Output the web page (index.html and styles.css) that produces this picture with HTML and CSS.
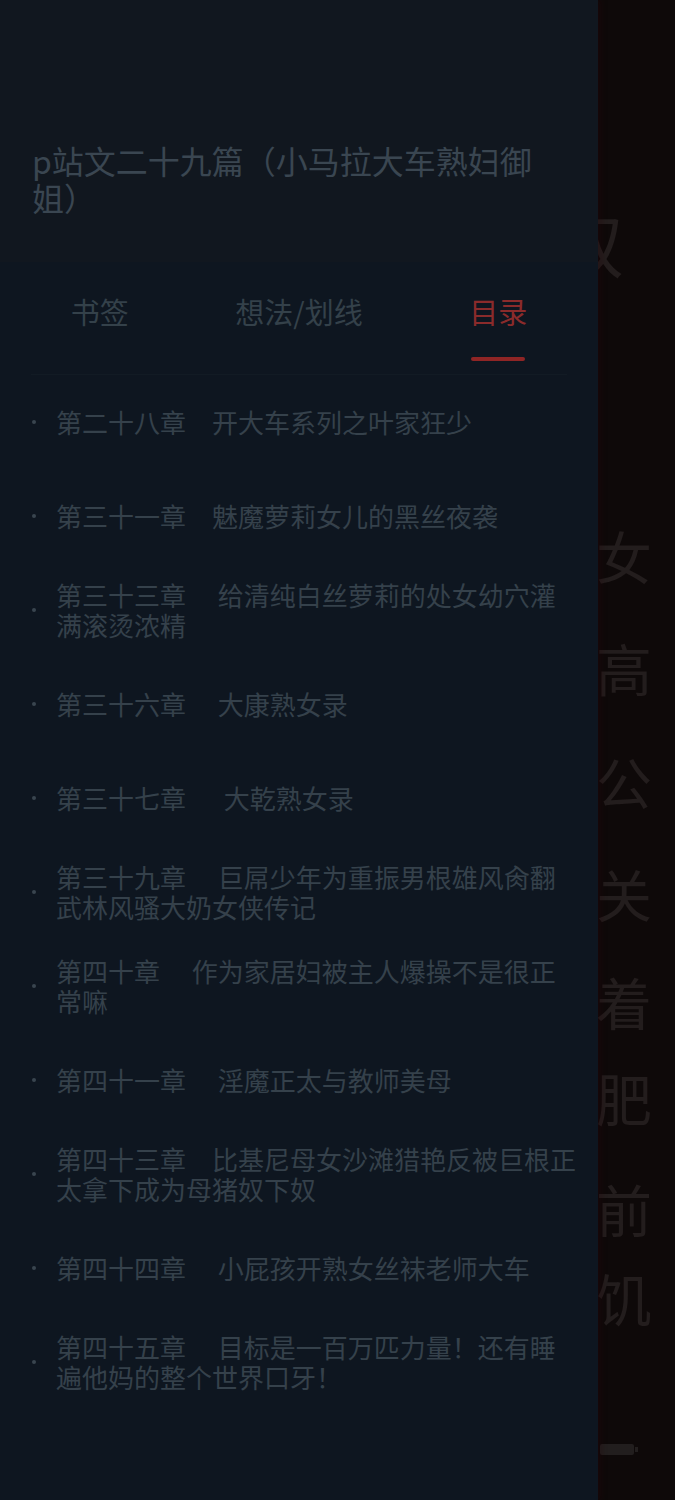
FILE: index.html
```html
<!DOCTYPE html>
<html lang="zh-CN">
<head>
<meta charset="utf-8">
<title>目录</title>
<link rel="stylesheet" href="styles.css">
</head>
<body>
<div class="reader">
  <div class="big-char">奴</div>
  <div class="col">
    <div class="ch">女</div>
    <div class="ch">高</div>
    <div class="ch">公</div>
    <div class="ch">关</div>
    <div class="ch">着</div>
    <div class="ch">肥</div>
    <div class="ch">前</div>
    <div class="ch">饥</div>
  </div>
  <div class="battery"><span class="fill"></span><span class="nub"></span></div>
</div>

<aside class="drawer">
  <header class="head">
    <h1 class="title">p站文二十九篇（小马拉大车熟妇御姐）</h1>
  </header>
  <nav class="tabs">
    <div class="tab"><span class="label">书签</span></div>
    <div class="tab"><span class="label">想法/划线</span></div>
    <div class="tab active"><span class="label">目录</span><span class="bar"></span></div>
  </nav>
  <div class="divider"></div>
  <ul class="toc">
    <li><span class="dot"></span><span class="txt">第二十八章　开大车系列之叶家狂少</span></li>
    <li><span class="dot"></span><span class="txt">第三十一章　魅魔萝莉女儿的黑丝夜袭</span></li>
    <li><span class="dot"></span><span class="txt">第三十三章　 给清纯白丝萝莉的处女幼穴灌满滚烫浓精</span></li>
    <li><span class="dot"></span><span class="txt">第三十六章　 大康熟女录</span></li>
    <li><span class="dot"></span><span class="txt">第三十七章　  大乾熟女录</span></li>
    <li><span class="dot"></span><span class="txt">第三十九章　 巨屌少年为重振男根雄风肏翻武林风骚大奶女侠传记</span></li>
    <li><span class="dot"></span><span class="txt">第四十章　 作为家居妇被主人爆操不是很正常嘛</span></li>
    <li><span class="dot"></span><span class="txt">第四十一章　 淫魔正太与教师美母</span></li>
    <li><span class="dot"></span><span class="txt">第四十三章　比基尼母女沙滩猎艳反被巨根正太拿下成为母猪奴下奴</span></li>
    <li><span class="dot"></span><span class="txt">第四十四章　 小屁孩开熟女丝袜老师大车</span></li>
    <li><span class="dot"></span><span class="txt">第四十五章　 目标是一百万匹力量！还有睡遍他妈的整个世界口牙！</span></li>
  </ul>
</aside>
</body>
</html>
```

FILE: styles.css
```css
* { box-sizing: border-box; }
html, body {
  margin: 0;
  padding: 0;
  width: 675px;
  height: 1500px;
  overflow: hidden;
  background: #0e0909;
  font-family: "Noto Sans CJK SC", "Noto Sans", sans-serif;
}

/* reader page behind the drawer */
.reader {
  position: relative;
  width: 675px;
  height: 1500px;
  padding-top: 208px;
  padding-left: 598px;
  color: #231d1d;
}
.big-char {
  margin-left: -44px;
  font-size: 70px;
  line-height: 70px;
  height: 70px;
}
.col {
  margin-top: 249px;
  display: flex;
  flex-direction: column;
}
.ch {
  font-size: 56px;
  line-height: 56px;
  height: 56px;
  margin-left: -2px;
}
.ch:nth-child(2) { margin-top: 56px; }
.ch:nth-child(3) { margin-top: 58px; }
.ch:nth-child(4) { margin-top: 56px; }
.ch:nth-child(5) { margin-top: 52px; }
.ch:nth-child(6) { margin-top: 40px; }
.ch:nth-child(7) { margin-top: 55px; }
.ch:nth-child(8) { margin-top: 33px; }

.battery {
  margin-top: 118px;
  margin-left: 2px;
  width: 38px;
  height: 12px;
  display: flex;
  align-items: center;
}
.battery .fill {
  width: 34px;
  height: 11px;
  border-radius: 2px;
  background: #221e1e;
}
.battery .nub {
  width: 3px;
  height: 5px;
  margin-left: 1px;
  background: #221e1e;
}

/* drawer overlay */
.drawer {
  position: absolute;
  top: 0;
  left: 0;
  width: 598px;
  height: 1500px;
  background: #0e1620;
  display: flex;
  flex-direction: column;
  box-shadow: 3px 0 6px rgba(40, 6, 12, 0.35);
}
.head {
  height: 262px;
  background: #11171f;
  padding: 142px 40px 0 32px;
}
.title {
  margin: 0;
  font-size: 32px;
  line-height: 37px;
  font-weight: 400;
  color: #3a4651;
}
.tabs {
  height: 112px;
  display: flex;
}
.tab {
  flex: 1;
  display: flex;
  flex-direction: column;
  align-items: center;
  padding-top: 31px;
}
.label {
  font-size: 29px;
  line-height: 36px;
  color: #34414a;
}
.tab.active .label { color: #8b2b2b; }
.bar {
  margin-top: 28px;
  width: 54px;
  height: 4px;
  border-radius: 2px;
  background: #8f2525;
}
.divider {
  height: 1px;
  margin: 0 31px;
  background: #121b24;
}
.toc {
  list-style: none;
  margin: 0;
  padding: 0 18px 0 32px;
}
.toc li {
  height: 94px;
  display: flex;
  align-items: center;
}
.dot {
  flex: none;
  width: 4px;
  height: 4px;
  border-radius: 50%;
  background: #39454f;
  margin-right: 20px;
}
.txt {
  font-size: 26px;
  line-height: 30px;
  color: #35414b;
  white-space: pre-wrap;
}
```
